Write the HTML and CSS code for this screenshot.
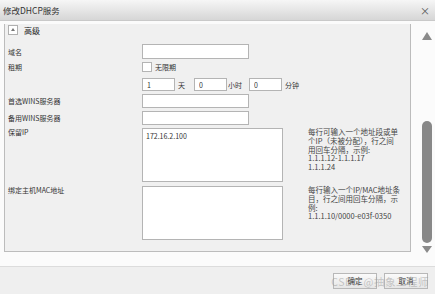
FILE: index.html
```html
<!DOCTYPE html>
<html lang="zh-CN">
<head>
    <meta charset="UTF-8">
    <title>修改DHCP服务</title>
    <link rel="stylesheet" href="styles.css">
</head>
<body>
    <div class="dialog">
        <div class="title-bar">
            <span class="title">修改DHCP服务</span>
            <span class="close">×</span>
        </div>

        <div class="main">
            <div class="scroll-area">
                <div class="panel">
                    <div class="panel-head">
                        <span class="toggle"></span>
                        <span>高级</span>
                    </div>

                    <div class="row row-input">
                        <label class="label">域名</label>
                        <input class="field" type="text">
                    </div>

                    <div class="row row-check">
                        <label class="label">租期</label>
                        <span class="check"></span>
                        <span class="check-text">无限期</span>
                    </div>

                    <div class="row row-time">
                        <span class="label"></span>
                        <input class="field small" type="text" value="1">
                        <span class="unit">天</span>
                        <input class="field small" type="text" value="0">
                        <span class="unit unit-wide">小时</span>
                        <input class="field small" type="text" value="0">
                        <span class="unit">分钟</span>
                    </div>

                    <div class="row row-wins">
                        <label class="label">首选WINS服务器</label>
                        <input class="field" type="text">
                    </div>

                    <div class="row row-wins">
                        <label class="label">备用WINS服务器</label>
                        <input class="field" type="text">
                    </div>

                    <div class="row row-area">
                        <label class="label label-top">保留IP</label>
                        <textarea class="area">172.16.2.100</textarea>
                        <div class="hint">每行可输入一个地址段或单个IP（未被分配），行之间用回车分隔，示例:<br>1.1.1.12-1.1.1.17<br>1.1.1.24</div>
                    </div>

                    <div class="row row-area second">
                        <label class="label label-top">绑定主机MAC地址</label>
                        <textarea class="area"></textarea>
                        <div class="hint">每行输入一个IP/MAC地址条目，行之间用回车分隔，示例:<br>1.1.1.10/0000-e03f-0350</div>
                    </div>
                </div>
            </div>

            <div class="scrollbar">
                <span class="arrow-up"></span>
                <span class="thumb"></span>
                <span class="arrow-down"></span>
            </div>
        </div>

        <div class="footer">
            <button class="btn">确定</button>
            <button class="btn">取消</button>
            <span class="watermark">CSDN @抽象工程师</span>
        </div>
    </div>
</body>
</html>
```

FILE: styles.css
```css
body {
    margin: 0;
    font-family: "Noto Sans CJK SC", "Liberation Sans", sans-serif;
    color: #333;
    background: #fbfbfb;
}

.dialog {
    width: 435px;
    height: 294px;
    overflow: hidden;
    display: flex;
    flex-direction: column;
}

.title-bar {
    height: 20px;
    flex: none;
    display: flex;
    align-items: center;
    justify-content: space-between;
    padding: 0 5px 0 3px;
    background: linear-gradient(#f6f6f6, #d6d6d6);
    border-bottom: 1px solid #c9c9c9;
    font-size: 8.5px;
}

.close {
    font-size: 10px;
    color: #555;
}

.main {
    height: 245px;
    flex: none;
    display: flex;
}

.scroll-area {
    width: 411px;
    padding: 1px 0 0 4px;
    box-sizing: border-box;
}

.panel {
    height: 227px;
    background: #f0f0f0;
    border: 1px solid #bcbcbc;
    border-top: none;
    padding-left: 3px;
    font-size: 7px;
}

.panel-head {
    margin-top: 2px;
    height: 12px;
    display: flex;
    align-items: center;
    gap: 6px;
    font-size: 8px;
    color: #222;
}

.toggle {
    width: 8px;
    height: 8px;
    border: 1px solid #b0b0b0;
    background: #fff;
    position: relative;
}

.toggle::after {
    content: "";
    position: absolute;
    left: 2px;
    top: 2px;
    border-left: 2px solid transparent;
    border-right: 2px solid transparent;
    border-bottom: 3px solid #777;
}

.row {
    display: flex;
    align-items: center;
}

.label {
    width: 134px;
    flex: none;
}

.row-input {
    margin-top: 8px;
    height: 15px;
}

.row-check {
    margin-top: 3px;
    height: 10px;
}

.row-time {
    margin-top: 6px;
    height: 13px;
}

.row-wins {
    margin-top: 3px;
    height: 14px;
}

.row-area {
    margin-top: 3px;
    height: 54px;
    align-items: flex-start;
}

.row-area.second {
    margin-top: 4px;
}

.label-top {
    line-height: 8px;
}

.field {
    width: 107px;
    height: 100%;
    box-sizing: border-box;
    margin: 0;
    border: 1px solid #b4b4b4;
    background: #fff;
    padding: 0 4px;
    font-family: inherit;
    font-size: 7px;
    color: #333;
}

.field.small {
    width: 33px;
}

.unit {
    width: 19px;
    flex: none;
    padding-left: 3px;
    box-sizing: border-box;
}

.unit-wide {
    width: 22px;
    padding-left: 1px;
}

.check {
    width: 8px;
    height: 8px;
    border: 1px solid #b4b4b4;
    background: #fff;
    margin-right: 3px;
}

.area {
    width: 141px;
    height: 54px;
    box-sizing: border-box;
    margin: 0;
    border: 1px solid #b4b4b4;
    background: #fff;
    padding: 2px 3px;
    resize: none;
    font-family: inherit;
    font-size: 7px;
    color: #333;
}

.hint {
    width: 93px;
    margin-left: 25px;
    line-height: 8.8px;
    color: #444;
    font-size: 7.5px;
}

.scrollbar {
    flex: 1;
    display: flex;
    flex-direction: column;
    align-items: center;
    padding: 11px 0 0 8px;
}

.arrow-up {
    border-left: 5px solid transparent;
    border-right: 5px solid transparent;
    border-bottom: 8px solid #8a8a8a;
}

.thumb {
    width: 10px;
    height: 122px;
    margin-top: 81px;
    border-radius: 5px;
    background: #888;
}

.arrow-down {
    margin-top: 3px;
    border-left: 5px solid transparent;
    border-right: 5px solid transparent;
    border-top: 7px solid #8a8a8a;
}

.footer {
    flex: 1;
    position: relative;
    display: flex;
    justify-content: flex-end;
    align-items: center;
    gap: 7px;
    padding-right: 7px;
    background: #efefef;
    border-top: 1px solid #dcdcdc;
}

.btn {
    width: 44px;
    height: 16px;
    padding: 0;
    border: 1px solid #b8b8b8;
    background: linear-gradient(#fafafa, #e6e6e6);
    font-family: inherit;
    font-size: 7.5px;
    color: #333;
}

.watermark {
    position: absolute;
    right: 6px;
    top: 7px;
    font-size: 10.5px;
    color: rgba(150, 150, 150, 0.5);
    letter-spacing: 0.5px;
}
```
